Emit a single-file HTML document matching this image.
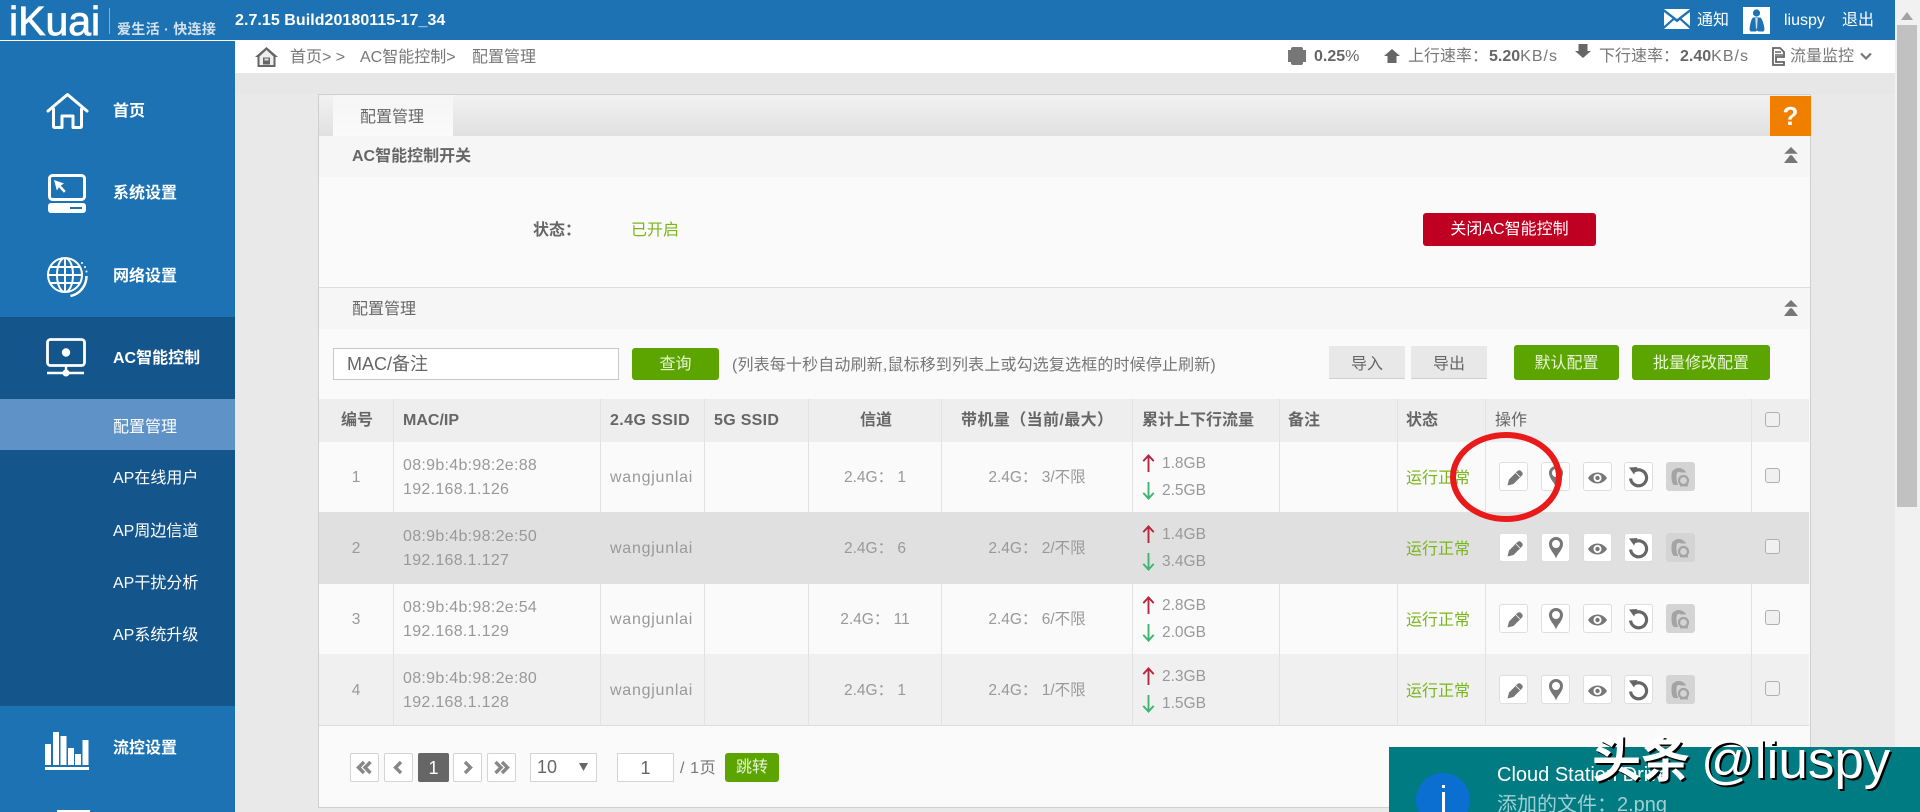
<!DOCTYPE html>
<html lang="zh-CN">
<head>
<meta charset="utf-8">
<title>iKuai</title>
<style>
html,body{margin:0;padding:0;width:1920px;height:812px;overflow:hidden;background:#e9e9e9}
body{position:relative;font-family:"Liberation Sans","Noto Sans CJK SC",sans-serif;font-size:16px;color:#777}
.a{position:absolute}
.t{position:absolute;white-space:nowrap;line-height:20px;height:20px;margin-top:1px}
.w{color:#fff}
.s{font-weight:700;color:#fff}
.h{font-weight:700;color:#666}
.c{color:#999;font-size:16px;letter-spacing:.3px}
.g{color:#7ab51d}
.m{color:#999;font-size:15.5px}
.wj{color:#999;letter-spacing:.75px}
.ctr{text-align:center}
.v{position:absolute;top:399px;height:326px;width:1px;background:#e2e2e2}
.b{position:absolute;width:27px;height:27px;background:#fff;border:1px solid #dedede;border-radius:3px}
.b svg,.d svg{position:absolute;left:0;top:0;width:27px;height:27px}
.d{position:absolute;width:29px;height:29px;background:#d4d4d4;border-radius:3px}
.d svg{width:29px;height:29px}
.cb{position:absolute;width:13px;height:13px;background:#f0f0f0;border:1px solid #b0b0b0;border-radius:3px}
.btn{position:absolute;color:#fff;text-align:center;border-radius:3px;background:#5ca500}
.pg{position:absolute;top:753px;width:27px;height:27px;background:#fff;border:1px solid #d4d4d4;border-radius:2px}
.pg svg{position:absolute;left:0;top:0;width:27px;height:27px}
</style>
</head>
<body>
<svg width="0" height="0" style="position:absolute">
<defs>
<symbol id="pen" viewBox="0 0 27 27"><path d="M7.500 22.500L9 16.500 17.500 8c1-1 2.500-1 3.500 0l1 1c1 1 1 2.500 0 3.500L13.500 21z" fill="#777"/><path d="M16 10l4 4" stroke="#fff" stroke-width=".8"/></symbol>
<symbol id="pin" viewBox="0 0 27 27"><path d="M14 24.500C12.500 19.500 7 15.500 7 10a7 7 0 0 1 14 0C21 15.500 15.500 19.500 14 24.500z" fill="#777"/><circle cx="14" cy="10" r="4" fill="#fff"/></symbol>
<symbol id="eye" viewBox="0 0 27 27"><path d="M4 15c2.500-3.800 5.800-5.500 9.500-5.500S20.500 11.200 23 15c-2.500 3.800-5.800 5.500-9.500 5.500S6.500 18.800 4 15z" fill="#777"/><circle cx="13.500" cy="15" r="4" fill="#fff"/><circle cx="13.500" cy="15" r="2.200" fill="#777"/></symbol>
<symbol id="ref" viewBox="0 0 27 27"><path d="M9.500 7.900A8 8 0 1 1 5.600 15.500" fill="none" stroke="#666" stroke-width="3.200"/><path d="M4 4.500l8.500-.5-3.500 7.500z" fill="#666"/></symbol>
<symbol id="cld" viewBox="0 0 29 29"><path d="M8 23c-1.500-1-2.500-3-2.500-9 0-4 1-6 3-6.500 1.500-2 7-2 8.500 0 1.500.4 2.500 1.500 3 3h-5c-1-.8-2.500-.8-3.500 0-1 1-1 2-1 4.500 0 3.500.5 6 2 8z" fill="#a4a4a4"/><circle cx="17.500" cy="18.500" r="4.500" fill="none" stroke="#a4a4a4" stroke-width="2.200"/><path d="M14 23.500h8" stroke="#a4a4a4" stroke-width="1.800"/></symbol>
<symbol id="up" viewBox="0 0 13 20"><path d="M6.500 19V2M1 7.500L6.500 1.500 12 7.500" fill="none" stroke="#b5263f" stroke-width="2"/></symbol>
<symbol id="dn" viewBox="0 0 13 20"><path d="M6.500 1v17M1 12.500l5.500 6 5.500-6" fill="none" stroke="#3fb56f" stroke-width="2"/></symbol>
<symbol id="col" viewBox="0 0 16 16"><path d="M8 0l7 7H1z" fill="#777"/><path d="M8 7l7 9H1z" fill="#777"/><path d="M1 7.500h14" stroke="#f6f6f6" stroke-width="1.500"/></symbol>
</defs>
</svg>

<!-- header -->
<div class="a" style="left:0;top:0;width:1895px;height:40px;background:#1c72b3"></div>
<div class="a" style="left:0;top:40px;width:235px;height:1px;background:#fff"></div>
<div class="t w" style="left:9px;top:-2px;height:44px;line-height:44px;font-size:41px;-webkit-text-stroke:.8px #fff">iKuai</div>
<div class="a" style="left:109px;top:8px;width:1px;height:26px;background:#7fb0d4"></div>
<div class="t" style="left:117px;top:18px;font-size:14px;font-weight:700;color:#d2e2ef;letter-spacing:.3px">爱生活 · 快连接</div>
<div class="t s" style="left:235px;top:10px;font-size:16px;letter-spacing:.05px">2.7.15 Build20180115-17_34</div>
<svg class="a" style="left:1664px;top:9px" width="26" height="20" viewBox="0 0 26 20"><path d="M0 0h26L13 10z" fill="#fff"/><path d="M0 3l8.500 6.500L0 17zM26 3l-8.500 6.500L26 17zM10 11l3 2.300 3-2.300L26 20H0z" fill="#fff"/></svg>
<div class="t w" style="left:1697px;top:10px">通知</div>
<div class="a" style="left:1743px;top:7px;width:27px;height:27px;background:#fff"></div>
<svg class="a" style="left:1743px;top:7px" width="27" height="27" viewBox="0 0 27 27"><circle cx="13.500" cy="6" r="3.600" fill="#1c72b3"/><path d="M9.500 10.500h8c2 2 3.500 7 4 12l-1 2h-5l-1.500-1-1 1h-5.500l-1-2c.5-5 1.500-10 3.500-12z" fill="#1c72b3"/><path d="M12.300 11h2.400l-.6 10-.6 1.500-.6-1.500z" fill="#cfe0ee"/></svg>
<div class="t w" style="left:1784px;top:10px">liuspy</div>
<div class="t w" style="left:1842px;top:10px">退出</div>

<!-- breadcrumb bar -->
<div class="a" style="left:235px;top:40px;width:1660px;height:33px;background:#fff"></div>
<svg class="a" style="left:255px;top:47px" width="23" height="20" viewBox="0 0 23 20"><path d="M11.500 0L23 10h-2.500v10h-18V10H0z" fill="#666"/><path d="M11.500 3L4.500 9.500V18h14V9.500z" fill="#eee"/><rect x="8" y="10.500" width="7" height="7" fill="#666"/><rect x="9.500" y="11.500" width="4" height="2" fill="#ddd"/></svg>
<div class="t" style="left:290px;top:47px">首页&gt; &gt;</div>
<div class="t" style="left:360px;top:47px">AC智能控制&gt;</div>
<div class="t" style="left:472px;top:47px">配置管理</div>

<svg class="a" style="left:1288px;top:47px" width="18" height="18" viewBox="0 0 18 18"><rect x="3" y="0" width="12" height="18" rx="2" fill="#777"/><rect x="0" y="3" width="18" height="12" fill="#777"/></svg>
<div class="t" style="left:1314px;top:46px;font-weight:700;color:#666">0.25<span style="font-weight:400">%</span></div>
<svg class="a" style="left:1384px;top:49px" width="16" height="14" viewBox="0 0 16 14"><path d="M8 0l8 7h-3.500v7h-9V7H0z" fill="#666"/></svg>
<div class="t" style="left:1408px;top:46px">上行速率：<b style="color:#666;margin-left:1px">5.20</b><span style="letter-spacing:1px">KB/s</span></div>
<svg class="a" style="left:1575px;top:44px" width="16" height="14" viewBox="0 0 16 14"><path d="M8 14L0 7h3.500V0h9v7H16z" fill="#666"/></svg>
<div class="t" style="left:1599px;top:46px">下行速率：<b style="color:#666;margin-left:1px">2.40</b><span style="letter-spacing:1px">KB/s</span></div>
<svg class="a" style="left:1771px;top:47px" width="15" height="19" viewBox="0 0 15 19"><path d="M2 1h7l4 4v5H5v5h8v3H2z" fill="none" stroke="#666" stroke-width="1.800"/><path d="M4 5h6M4 8h8" stroke="#666" stroke-width="1.500"/></svg>
<div class="t" style="left:1790px;top:46px">流量监控</div>
<svg class="a" style="left:1860px;top:52px" width="12" height="9" viewBox="0 0 12 9"><path d="M1 1.500l5 5 5-5" fill="none" stroke="#777" stroke-width="2.200"/></svg>

<!-- background strip -->
<div class="a" style="left:235px;top:73px;width:1660px;height:21px;background:#e7e7e7"></div>

<!-- sidebar -->
<div class="a" style="left:0;top:41px;width:235px;height:276px;background:#1c72b3"></div>
<div class="a" style="left:0;top:317px;width:235px;height:389px;background:#14558c"></div>
<div class="a" style="left:0;top:399px;width:235px;height:51px;background:#5f93c7"></div>
<div class="a" style="left:0;top:706px;width:235px;height:106px;background:#1c72b3"></div>

<svg class="a" style="left:46px;top:92px" width="43" height="37" viewBox="0 0 43 37"><path d="M2 19L21.500 2.500 41 19M7.500 17v17c0 1 .5 1.500 1.500 1.500h7V24h11v11.500h7c1 0 1.500-.5 1.500-1.500V17" fill="none" stroke="#fff" stroke-width="3" stroke-linejoin="round" stroke-linecap="round"/></svg>
<div class="t s" style="left:113px;top:101px">首页</div>
<svg class="a" style="left:48px;top:174px" width="38" height="39" viewBox="0 0 38 39"><rect x="1.500" y="1.500" width="35" height="24" rx="3" fill="none" stroke="#fff" stroke-width="3"/><rect x="0" y="29" width="38" height="10" rx="3" fill="#fff"/><rect x="22" y="33" width="12" height="2" fill="#1c72b3"/><path d="M6 6l10 3.500-3.300 2 5 5.500-1.800 1.800-5-5.500-2 3.200z" fill="#fff"/></svg>
<div class="t s" style="left:113px;top:183px">系统设置</div>
<svg class="a" style="left:47px;top:256px" width="42" height="42" viewBox="0 0 42 42"><g fill="none" stroke="#fff" stroke-width="2"><circle cx="18" cy="19" r="17"/><ellipse cx="18" cy="19" rx="8" ry="17"/><path d="M18 2v34M1 19h34M3.500 11h29M3.500 27h29"/><path d="M39.500 20c0 9-6 18-16 20" stroke-width="2.500"/></g><circle cx="35" cy="7" r="1" fill="#fff"/><circle cx="38" cy="11" r="1" fill="#fff"/><circle cx="39.500" cy="15.500" r="1" fill="#fff"/></svg>
<div class="t s" style="left:113px;top:266px">网络设置</div>
<svg class="a" style="left:46px;top:338px" width="40" height="39" viewBox="0 0 40 39"><rect x="1.500" y="1.500" width="37" height="26" rx="3" fill="none" stroke="#fff" stroke-width="2.800"/><circle cx="20" cy="14.500" r="4.200" fill="#fff"/><path d="M20 27v8M1 35h37" stroke="#fff" stroke-width="2.400"/><circle cx="20" cy="35" r="3.500" fill="#fff"/></svg>
<div class="t s" style="left:113px;top:348px">AC智能控制</div>
<div class="t w" style="left:113px;top:417px">配置管理</div>
<div class="t w" style="left:113px;top:468px">AP在线用户</div>
<div class="t w" style="left:113px;top:521px">AP周边信道</div>
<div class="t w" style="left:113px;top:573px">AP干扰分析</div>
<div class="t w" style="left:113px;top:625px">AP系统升级</div>
<svg class="a" style="left:45px;top:732px" width="44" height="38" viewBox="0 0 44 38"><g fill="#fff"><rect x="0" y="12" width="6" height="21"/><rect x="8" y="0" width="6" height="33"/><rect x="15.500" y="4" width="6" height="29"/><rect x="23" y="16" width="6" height="17"/><rect x="30" y="22" width="6" height="11"/><rect x="37.500" y="8" width="6" height="25"/><rect x="0" y="35" width="44" height="3"/></g></svg>
<div class="t s" style="left:113px;top:738px">流控设置</div>
<div class="a" style="left:57px;top:810px;width:33px;height:2px;background:#fff"></div>

<!-- panel -->
<div class="a" style="left:318px;top:94px;width:1491px;height:712px;background:#fafafa;border:1px solid #cfcfcf"></div>
<div class="a" style="left:319px;top:95px;width:1491px;height:41px;background:linear-gradient(#f2f2f2,#e0e0e0)"></div>
<div class="a" style="left:333px;top:95px;width:120px;height:41px;background:linear-gradient(#f5f5f5,#fafafa)"></div>
<div class="t" style="left:360px;top:107px;color:#666">配置管理</div>
<div class="a" style="left:1770px;top:96px;width:41px;height:40px;background:#f07f00"></div>
<div class="t w" style="left:1770px;top:99px;width:41px;height:32px;line-height:32px;text-align:center;font-size:26px;font-weight:700">?</div>

<div class="a" style="left:319px;top:136px;width:1491px;height:41px;background:#f6f6f6"></div>
<div class="t" style="left:352px;top:146px;font-weight:700;color:#666">AC智能控制开关</div>
<svg class="a" style="left:1783px;top:147px" width="16" height="16"><use href="#col"/></svg>
<div class="t" style="left:533px;top:220px;font-weight:700;color:#666">状态：</div>
<div class="t g" style="left:631px;top:220px">已开启</div>
<div class="btn" style="left:1423px;top:213px;width:173px;height:33px;line-height:33px;background:#c00022">关闭AC智能控制</div>

<div class="a" style="left:319px;top:287px;width:1491px;height:1px;background:#ddd"></div>
<div class="a" style="left:319px;top:288px;width:1491px;height:41px;background:#f6f6f6"></div>
<div class="t" style="left:352px;top:299px;color:#666">配置管理</div>
<svg class="a" style="left:1783px;top:300px" width="16" height="16"><use href="#col"/></svg>

<!-- toolbar -->
<div class="a" style="left:333px;top:348px;width:284px;height:30px;background:#fff;border:1px solid #c8c8c8"></div>
<div class="t" style="left:347px;top:353px;font-size:18px;color:#666">MAC/备注</div>
<div class="btn" style="left:632px;top:348px;width:87px;height:32px;line-height:34px;color:#e8f5d8">查询</div>
<div class="t" style="left:732px;top:355px;color:#777;letter-spacing:.15px">(列表每十秒自动刷新,鼠标移到列表上或勾选复选框的时候停止刷新)</div>
<div class="a ctr" style="left:1329px;top:346px;width:76px;height:32px;line-height:38px;background:#e8e8e8;border-bottom:1px solid #d0d0d0;color:#666">导入</div>
<div class="a ctr" style="left:1411px;top:346px;width:76px;height:32px;line-height:38px;background:#e8e8e8;border-bottom:1px solid #d0d0d0;color:#666">导出</div>
<div class="btn" style="left:1514px;top:345px;width:105px;height:35px;line-height:37px;color:#e8f5d8">默认配置</div>
<div class="btn" style="left:1632px;top:345px;width:138px;height:35px;line-height:37px;color:#e8f5d8">批量修改配置</div>

<!-- table -->
<div class="a" style="left:319px;top:399px;width:1490px;height:43px;background:#eee"></div>
<div class="a" style="left:319px;top:442px;width:1490px;height:70px;background:#fafafa"></div>
<div class="a" style="left:319px;top:584px;width:1490px;height:70px;background:#fafafa"></div>
<div class="a" style="left:319px;top:654px;width:1490px;height:71px;background:#f0f0f0"></div>
<div class="a" style="left:319px;top:725px;width:1490px;height:1px;background:#ddd"></div>
<div class="v" style="left:393px"></div><div class="v" style="left:600px"></div><div class="v" style="left:704px"></div><div class="v" style="left:808px"></div><div class="v" style="left:941px"></div><div class="v" style="left:1132px"></div><div class="v" style="left:1279px"></div><div class="v" style="left:1397px"></div><div class="v" style="left:1485px"></div><div class="v" style="left:1751px"></div>
<div class="a" style="left:319px;top:512px;width:1490px;height:72px;background:#e0e0e0"></div>

<div class="t h" style="left:341px;top:410px">编号</div>
<div class="t h" style="left:403px;top:410px">MAC/IP</div>
<div class="t h" style="left:610px;top:410px;letter-spacing:.4px">2.4G SSID</div>
<div class="t h" style="left:714px;top:410px;letter-spacing:.3px">5G SSID</div>
<div class="t h" style="left:860px;top:410px">信道</div>
<div class="t h" style="left:961px;top:410px;letter-spacing:.4px">带机量（当前/最大）</div>
<div class="t h" style="left:1142px;top:410px">累计上下行流量</div>
<div class="t h" style="left:1288px;top:410px">备注</div>
<div class="t h" style="left:1406px;top:410px">状态</div>
<div class="t" style="left:1495px;top:410px;color:#666">操作</div>
<div class="cb" style="left:1765px;top:412px"></div>

<!-- row 1 -->
<div class="t m ctr" style="left:319px;top:467px;width:74px">1</div>
<div class="t c" style="left:403px;top:455px">08:9b:4b:98:2e:88</div>
<div class="t c" style="left:403px;top:479px">192.168.1.126</div>
<div class="t wj" style="left:610px;top:467px">wangjunlai</div>
<div class="t m ctr" style="left:809px;top:467px;width:132px">2.4G： 1</div>
<div class="t m ctr" style="left:942px;top:467px;width:190px">2.4G： 3/不限</div>
<svg class="a" style="left:1142px;top:454px" width="13" height="19"><use href="#up"/></svg>
<div class="t m" style="left:1162px;top:453px">1.8GB</div>
<svg class="a" style="left:1142px;top:481px" width="13" height="19"><use href="#dn"/></svg>
<div class="t m" style="left:1162px;top:480px">2.5GB</div>
<div class="t g" style="left:1406px;top:468px">运行正常</div>
<div class="b" style="left:1499px;top:462px"><svg><use href="#pen"/></svg></div>
<div class="b" style="left:1541px;top:462px"><svg><use href="#pin"/></svg></div>
<div class="b" style="left:1583px;top:462px"><svg><use href="#eye"/></svg></div>
<div class="b" style="left:1624px;top:462px"><svg><use href="#ref"/></svg></div>
<div class="d" style="left:1666px;top:462px"><svg><use href="#cld"/></svg></div>
<div class="cb" style="left:1765px;top:468px"></div>

<!-- row 2 -->
<div class="t m ctr" style="left:319px;top:538px;width:74px">2</div>
<div class="t c" style="left:403px;top:526px">08:9b:4b:98:2e:50</div>
<div class="t c" style="left:403px;top:550px">192.168.1.127</div>
<div class="t wj" style="left:610px;top:538px">wangjunlai</div>
<div class="t m ctr" style="left:809px;top:538px;width:132px">2.4G： 6</div>
<div class="t m ctr" style="left:942px;top:538px;width:190px">2.4G： 2/不限</div>
<svg class="a" style="left:1142px;top:525px" width="13" height="19"><use href="#up"/></svg>
<div class="t m" style="left:1162px;top:524px">1.4GB</div>
<svg class="a" style="left:1142px;top:552px" width="13" height="19"><use href="#dn"/></svg>
<div class="t m" style="left:1162px;top:551px">3.4GB</div>
<div class="t g" style="left:1406px;top:539px">运行正常</div>
<div class="b" style="left:1499px;top:533px"><svg><use href="#pen"/></svg></div>
<div class="b" style="left:1541px;top:533px"><svg><use href="#pin"/></svg></div>
<div class="b" style="left:1583px;top:533px"><svg><use href="#eye"/></svg></div>
<div class="b" style="left:1624px;top:533px"><svg><use href="#ref"/></svg></div>
<div class="d" style="left:1666px;top:533px"><svg><use href="#cld"/></svg></div>
<div class="cb" style="left:1765px;top:539px"></div>

<!-- row 3 -->
<div class="t m ctr" style="left:319px;top:609px;width:74px">3</div>
<div class="t c" style="left:403px;top:597px">08:9b:4b:98:2e:54</div>
<div class="t c" style="left:403px;top:621px">192.168.1.129</div>
<div class="t wj" style="left:610px;top:609px">wangjunlai</div>
<div class="t m ctr" style="left:809px;top:609px;width:132px">2.4G： 11</div>
<div class="t m ctr" style="left:942px;top:609px;width:190px">2.4G： 6/不限</div>
<svg class="a" style="left:1142px;top:596px" width="13" height="19"><use href="#up"/></svg>
<div class="t m" style="left:1162px;top:595px">2.8GB</div>
<svg class="a" style="left:1142px;top:623px" width="13" height="19"><use href="#dn"/></svg>
<div class="t m" style="left:1162px;top:622px">2.0GB</div>
<div class="t g" style="left:1406px;top:610px">运行正常</div>
<div class="b" style="left:1499px;top:604px"><svg><use href="#pen"/></svg></div>
<div class="b" style="left:1541px;top:604px"><svg><use href="#pin"/></svg></div>
<div class="b" style="left:1583px;top:604px"><svg><use href="#eye"/></svg></div>
<div class="b" style="left:1624px;top:604px"><svg><use href="#ref"/></svg></div>
<div class="d" style="left:1666px;top:604px"><svg><use href="#cld"/></svg></div>
<div class="cb" style="left:1765px;top:610px"></div>

<!-- row 4 -->
<div class="t m ctr" style="left:319px;top:680px;width:74px">4</div>
<div class="t c" style="left:403px;top:668px">08:9b:4b:98:2e:80</div>
<div class="t c" style="left:403px;top:692px">192.168.1.128</div>
<div class="t wj" style="left:610px;top:680px">wangjunlai</div>
<div class="t m ctr" style="left:809px;top:680px;width:132px">2.4G： 1</div>
<div class="t m ctr" style="left:942px;top:680px;width:190px">2.4G： 1/不限</div>
<svg class="a" style="left:1142px;top:667px" width="13" height="19"><use href="#up"/></svg>
<div class="t m" style="left:1162px;top:666px">2.3GB</div>
<svg class="a" style="left:1142px;top:694px" width="13" height="19"><use href="#dn"/></svg>
<div class="t m" style="left:1162px;top:693px">1.5GB</div>
<div class="t g" style="left:1406px;top:681px">运行正常</div>
<div class="b" style="left:1499px;top:675px"><svg><use href="#pen"/></svg></div>
<div class="b" style="left:1541px;top:675px"><svg><use href="#pin"/></svg></div>
<div class="b" style="left:1583px;top:675px"><svg><use href="#eye"/></svg></div>
<div class="b" style="left:1624px;top:675px"><svg><use href="#ref"/></svg></div>
<div class="d" style="left:1666px;top:675px"><svg><use href="#cld"/></svg></div>
<div class="cb" style="left:1765px;top:681px"></div>

<!-- red circle -->
<svg class="a" style="left:1445px;top:428px" width="124" height="100" viewBox="0 0 124 100"><ellipse cx="61" cy="49" rx="53" ry="42" fill="none" stroke="#e81a1a" stroke-width="6"/></svg>

<!-- pagination -->
<div class="pg" style="left:350px"><svg viewBox="0 0 27 27"><path d="M13 8l-5.500 5.500L13 19M19.500 8L14 13.500 19.500 19" fill="none" stroke="#888" stroke-width="3.400"/></svg></div>
<div class="pg" style="left:384px"><svg viewBox="0 0 27 27"><path d="M16 8l-5.500 5.500L16 19" fill="none" stroke="#888" stroke-width="3.400"/></svg></div>
<div class="a w ctr" style="left:418px;top:753px;width:31px;height:29px;line-height:31px;background:#666;border-radius:2px;font-size:18px">1</div>
<div class="pg" style="left:453px"><svg viewBox="0 0 27 27"><path d="M11 8l5.500 5.500L11 19" fill="none" stroke="#888" stroke-width="3.400"/></svg></div>
<div class="pg" style="left:487px"><svg viewBox="0 0 27 27"><path d="M7.500 8l5.500 5.500L7.500 19M14 8l5.500 5.500L14 19" fill="none" stroke="#888" stroke-width="3.400"/></svg></div>
<div class="a" style="left:530px;top:753px;width:65px;height:27px;background:#fff;border:1px solid #d4d4d4"></div>
<div class="t" style="left:537px;top:756px;font-size:18px;color:#666">10</div>
<svg class="a" style="left:579px;top:763px" width="9" height="8" viewBox="0 0 9 8"><path d="M0 0h9L4.500 8z" fill="#666"/></svg>
<div class="a ctr" style="left:617px;top:753px;width:55px;height:27px;line-height:29px;background:#fff;border:1px solid #d4d4d4;font-size:18px;color:#666">1</div>
<div class="t" style="left:680px;top:758px;font-size:16px;color:#777;letter-spacing:.6px">/ 1页</div>
<div class="btn" style="left:725px;top:753px;width:54px;height:29px;line-height:29px;color:#e8f5d8">跳转</div>

<!-- scrollbar -->
<div class="a" style="left:1895px;top:0;width:25px;height:812px;background:#f1f1f1"></div>
<svg class="a" style="left:1901px;top:12px" width="12" height="8" viewBox="0 0 12 8"><path d="M6 0l6 8H0z" fill="#a3a3a3"/></svg>
<div class="a" style="left:1897px;top:25px;width:20px;height:482px;background:#c1c1c1"></div>

<!-- notification -->
<div class="a" style="left:1389px;top:747px;width:531px;height:65px;background:#017b82"></div>
<div class="a" style="left:1416px;top:773px;width:54px;height:54px;border-radius:50%;background:#0a6fd0"></div>
<div class="a" style="left:1442px;top:785px;width:3px;height:3px;background:#fff"></div>
<div class="a" style="left:1442px;top:792px;width:3px;height:20px;background:#fff"></div>
<div class="t w" style="left:1497px;top:762px;height:24px;line-height:24px;font-size:20px">Cloud Station Drive</div>
<div class="t" style="left:1497px;top:792px;height:24px;line-height:24px;font-size:20px;color:#9fcfd2">添加的文件：2.png</div>
<div class="t w" style="left:1592px;top:734px;height:52px;line-height:52px;font-size:49px;font-weight:700;text-shadow:2px 2px 0 #000">头条</div>
<div class="t w" style="left:1701px;top:732px;height:56px;line-height:56px;font-size:53px;text-shadow:2px 2px 0 #000">@liuspy</div>
</body>
</html>
